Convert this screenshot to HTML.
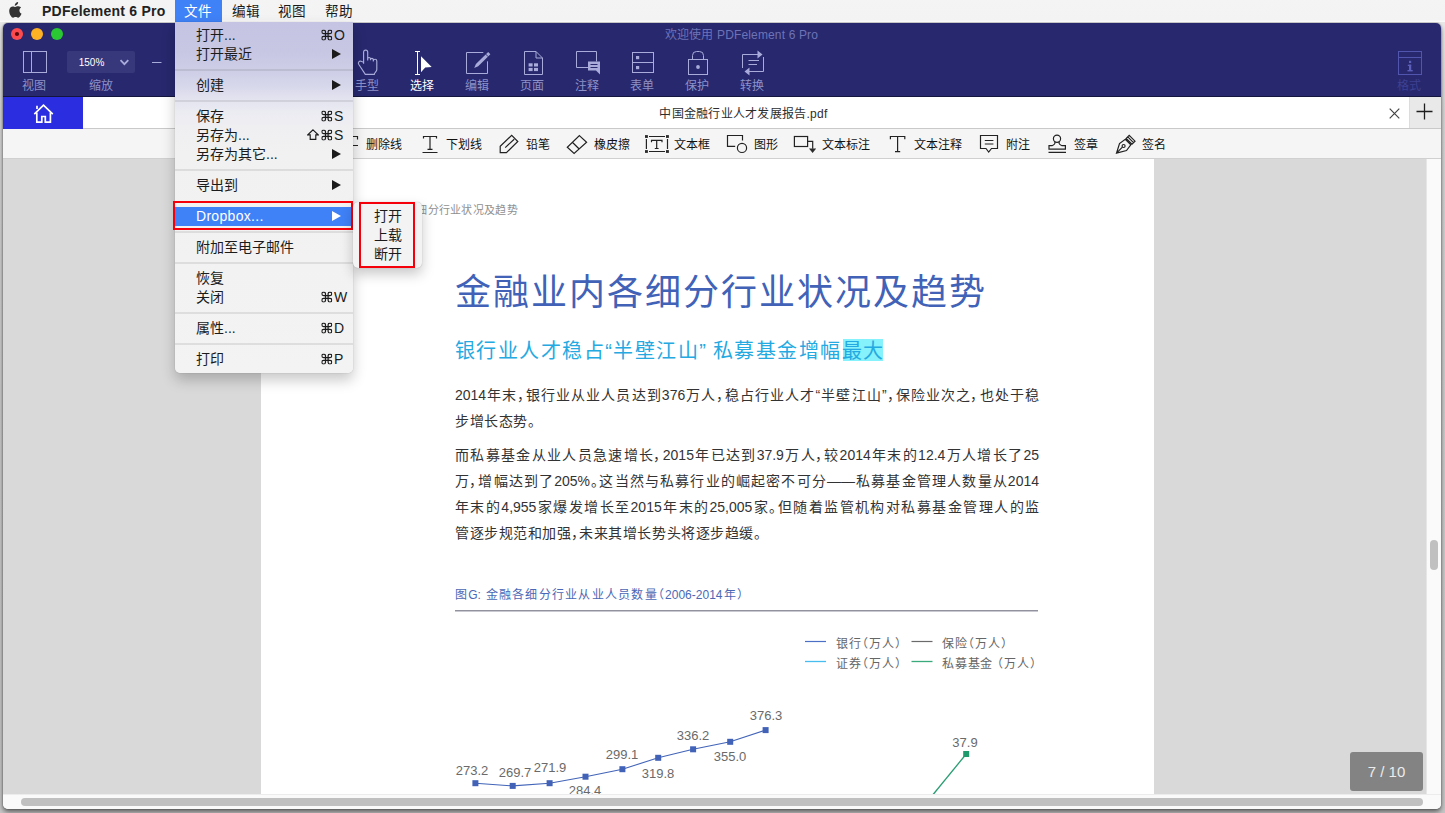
<!DOCTYPE html>
<html lang="zh-CN">
<head>
<meta charset="utf-8">
<title>PDFelement 6 Pro</title>
<style>
*{box-sizing:border-box;margin:0;padding:0}
html,body{width:1445px;height:813px;overflow:hidden}
body{position:relative;background:linear-gradient(180deg,#e8e8e8 22px,#d6d6d6 110px,#cbcbcb 400px,#c6c6c6 800px);font-family:"Liberation Sans",sans-serif;color:#222;-webkit-font-smoothing:antialiased}
.a{position:absolute}
.t{position:absolute;white-space:nowrap;overflow:hidden}
svg{position:absolute;left:0;top:0;overflow:visible}
/* window */
#shadow{left:3px;top:23px;width:1438px;height:786px;border-radius:5px;background:#fafafa;box-shadow:0 0 1.500px rgba(0,0,0,.55),0 3px 5px rgba(0,0,0,.5)}
#win{left:0;top:0;width:1445px;height:813px;clip-path:inset(23px 4px 4px 3px round 5px)}
#navy{left:3px;top:23px;width:1438px;height:74px;background:#27286e;border-bottom:1px solid #15163f}
.tl{font-size:12px;line-height:16px;height:16px;width:60px;text-align:center;color:#8d91c8;top:78px}
#tabbar{left:3px;top:97px;width:1438px;height:32px;background:#fff;border-bottom:1px solid #c9c9c9}
#home{left:3px;top:97px;width:80px;height:32px;background:#2b2de0}
#plusbox{left:1409px;top:97px;width:32px;height:31px;background:#e9e9e9;border-left:1px solid #dcdcdc}
#annot{left:3px;top:129px;width:1438px;height:30px;background:#f5f5f5;border-bottom:1px solid #d0d0d0}
.al{font-size:12px;line-height:16px;height:16px;top:137px;color:#111;font-weight:500}
#doc{left:3px;top:159px;width:1424px;height:635px;background:#d9d9d9}
#page{left:261px;top:159px;width:893px;height:635px;background:#fff}
#vs{left:1426px;top:159px;width:15px;height:635px;background:#fafafa;border-left:1px solid #e6e6e6}
#hs{left:3px;top:794px;width:1438px;height:15px;background:#fafafa;border-top:1px solid #ececec}
.thumb{background:#c0c0c0;border-radius:4px}
#badge{left:1350px;top:752px;width:73px;height:39px;background:#838383;border-radius:3px;color:#ececec;font-size:15px;line-height:39px;text-align:center}
/* menubar */
#mbar{left:0;top:0;width:1445px;height:22px;background:linear-gradient(180deg,#f4f4f4 0,#f3f3f3 20px,#f9f9f9 21px,#fbfbfb 22px)}
.mb{font-size:13.600px;line-height:22px;height:22px;top:1px;color:#1a1a1a}
/* dropdown */
#menu{left:175px;top:22px;width:178px;height:351px;border-radius:0 0 5px 5px;
 background:linear-gradient(180deg,#c5c5e3 0px,#c7c7e4 30px,#cfcfe7 52px,#d9d9ec 66px,#e4e4f0 78px,#ebebf2 90px,#efeff2 104px,#f1f1f1 130px,#f3f3f3 351px);
 box-shadow:0 7px 14px rgba(0,0,0,.22),0 0 1px rgba(0,0,0,.35)}
.mi{font-size:14px;line-height:19px;height:19px;left:196px;color:#1b1b1b}
.sep{left:175px;width:178px;height:2px;background:rgba(0,0,0,.085)}
.sk{font-size:14px;line-height:19px;height:19px;color:#1b1b1b}
#sub{left:353px;top:202px;width:69px;height:66px;border-radius:5px;background:#f3f3f3;box-shadow:0 6px 13px rgba(0,0,0,.22),0 0 1px rgba(0,0,0,.3)}
.red{border:2px solid #f5000a}
.j{text-align:justify;text-align-last:justify;text-justify:inter-character;font-feature-settings:"palt"}
.b{left:455px;height:24px;line-height:24px;font-size:14px;color:#333}
.lg{height:16px;line-height:16px;font-size:12px;color:#666}
.v{width:40px;height:16px;line-height:16px;font-size:13px;color:#6a6a6a;text-align:center}
</style>
</head>
<body>
<div class="a" id="shadow"></div>
<div class="a" id="win">
  <div class="a" id="navy"></div>
  <div class="a" id="tabbar"></div>
  <div class="a" id="home"></div>
  <div class="a" id="plusbox"></div>
  <div class="a" id="annot"></div>
  <div class="a" id="doc"></div>
  <div class="a" id="page"></div>
  <!-- page content -->
  <div class="t" style="left:350px;top:202px;width:168px;height:16px;line-height:16px;font-size:11px;letter-spacing:.3px;color:#909090;text-align:right">金融业内各细分行业状况及趋势</div>
  <div class="t j" style="left:455px;top:270px;width:530px;height:46px;line-height:46px;font-size:36px;font-weight:500;color:#4162b7">金融业内各细分行业状况及趋势</div>
  <div class="a" style="left:843px;top:339px;width:40px;height:22px;background:#86f2fb"></div>
  <div class="t j" style="left:455px;top:337px;width:428px;height:28px;line-height:28px;font-size:20px;font-weight:500;color:#25a9e1">银行业人才稳占“半壁江山” 私募基金增幅最大</div>
  <div class="t j b" style="top:383px;width:584px">2014年末，银行业从业人员达到376万人，稳占行业人才“半壁江山”，保险业次之，也处于稳</div>
  <div class="t j b" style="top:409px;width:80px">步增长态势。</div>
  <div class="t j b" style="top:443px;width:584px">而私募基金从业人员急速增长，2015年已达到37.9万人，较2014年末的12.4万人增长了25</div>
  <div class="t j b" style="top:469px;width:584px">万，增幅达到了205%。这当然与私募行业的崛起密不可分——私募基金管理人数量从2014</div>
  <div class="t j b" style="top:495px;width:584px">年末的4,955家爆发增长至2015年末的25,005家。但随着监管机构对私募基金管理人的监</div>
  <div class="t j b" style="top:521px;width:306px">管逐步规范和加强，未来其增长势头将逐步趋缓。</div>
  <div class="t j" style="left:455px;top:587px;width:288px;height:16px;line-height:16px;font-size:12px;color:#4a68b5">图G: 金融各细分行业从业人员数量（2006-2014年）</div>
  <div class="a" style="left:455px;top:610px;width:583px;height:2px;background:linear-gradient(180deg,#9a9aa6 0,#8a8a98 1px,#c9c9d1 1px,#c9c9d1 2px)"></div>
  <svg width="1445" height="813" viewBox="0 0 1445 813" fill="none">
    <path d="M805 641.500H826" stroke="#4a6fc4" stroke-width="1.200"/><path d="M911.500 641.500H932.500" stroke="#6a6a6a" stroke-width="1.200"/>
    <path d="M805 661.500H826" stroke="#46bdee" stroke-width="1.300"/><path d="M911.500 661.500H932.500" stroke="#3aaa7c" stroke-width="1.300"/>
    <path d="M475.400 783.200L512.700 785.900L549.600 783.200L585.500 776.700L622.400 769.200L658.200 757.800L693.100 749.300L730.200 741.800L765.600 730.100" stroke="#4264b8" stroke-width="1.100"/>
    <g fill="#4162b7"><rect x="472.400" y="780.200" width="6" height="6"/><rect x="509.700" y="782.900" width="6" height="6"/><rect x="546.600" y="780.200" width="6" height="6"/><rect x="582.500" y="773.700" width="6" height="6"/><rect x="619.400" y="766.200" width="6" height="6"/><rect x="655.200" y="754.800" width="6" height="6"/><rect x="690.100" y="746.300" width="6" height="6"/><rect x="727.200" y="738.800" width="6" height="6"/><rect x="762.600" y="727.100" width="6" height="6"/></g>
    <path d="M931.500 796.500L966.200 754" stroke="#2a9d73" stroke-width="1.300"/><rect x="963.200" y="751" width="6" height="6" fill="#1f9a6d"/>
  </svg>
  <div class="t j lg" style="left:836px;top:636px;width:65px">银行（万人）</div>
  <div class="t j lg" style="left:942px;top:636px;width:65px">保险（万人）</div>
  <div class="t j lg" style="left:836px;top:656px;width:65px">证券（万人）</div>
  <div class="t j lg" style="left:942px;top:656px;width:94px">私募基金 （万人）</div>
  <div class="t v" style="left:452px;top:763px">273.2</div>
  <div class="t v" style="left:495px;top:765px">269.7</div>
  <div class="t v" style="left:530px;top:760px">271.9</div>
  <div class="t v" style="left:565px;top:783px">284.4</div>
  <div class="t v" style="left:602px;top:747px">299.1</div>
  <div class="t v" style="left:638px;top:766px">319.8</div>
  <div class="t v" style="left:673px;top:728px">336.2</div>
  <div class="t v" style="left:710px;top:749px">355.0</div>
  <div class="t v" style="left:746px;top:708px">376.3</div>
  <div class="t v" style="left:945px;top:735px">37.9</div>
  <div class="a" id="vs"></div>
  <div class="a" id="hs"></div>
  <div class="a thumb" style="left:1430px;top:540px;width:8px;height:30px"></div>
  <div class="a thumb" style="left:21px;top:798px;width:1402px;height:8px"></div>
  <div class="a" id="badge">7 / 10</div>
  <!-- title + traffic lights -->
  <div class="t" style="left:600px;top:27px;width:283px;height:16px;line-height:16px;font-size:12px;text-align:center;color:#6e73b6;letter-spacing:.15px">欢迎使用 PDFelement 6 Pro</div>
  <svg width="1445" height="813" viewBox="0 0 1445 813" fill="none">
    <!-- traffic lights -->
    <circle cx="17" cy="34" r="6" fill="#fc4a4e"/><circle cx="17" cy="34" r="2.1" fill="#5a0a0c"/>
    <circle cx="37" cy="34" r="6" fill="#fdb125"/>
    <circle cx="57" cy="34" r="6" fill="#2ac833"/>
    <g stroke="#a9acda" stroke-width="1" fill="none">
      <!-- view -->
      <rect x="23.5" y="51.5" width="23" height="21"/><path d="M31.5 51.5V72.5"/>
      <!-- zoom box -->
      <rect x="67" y="51" width="68" height="22" rx="2" fill="#36387b" stroke="none"/>
      <path d="M120.5 60.2L124.4 64.2L128.3 60.2" stroke-width="1.8"/>
      <path d="M152 62.5H161.5"/>
      <!-- hand -->
      <path stroke-width="1.150" d="M363.600 63.800V52.200a2.050 2.050 0 0 1 4.100 0V60.600M367.700 58.900a1.400 1.400 0 0 1 2.800 0V60.300M370.500 59.800a1.400 1.400 0 0 1 2.800 0V61.500M373.300 61a1.750 1.750 0 0 1 3.500 0V69.500c0 2.200-2.500 2.800-2.500 4.800H365.300L358.700 64.300c-1.100-1.900 .700-3.700 2.300-3.100L363.600 62.300"/>
      <!-- edit -->
      <path d="M483.300 52.500H466.500V73.500H487.500V61.300"/>
      <!-- page -->
      <path d="M524.500 51.500H536L542.500 58V74.500H524.500zM536 51.500V58H542.500"/>
      <!-- comment -->
      <path d="M588 67.500H576.500V51.500H596.500V61.500"/>
      <!-- form -->
      <rect x="632.500" y="52.500" width="21" height="20"/><path d="M632.500 62.500H653.500"/>
      <!-- lock -->
      <rect x="688.500" y="59.500" width="19" height="15"/><path d="M692.500 59.500V55.500a4 4 0 0 1 4-4h3a4 4 0 0 1 4 4V59.500"/>
      <!-- convert -->
      <path d="M742.500 68V54.500H759M763.500 57V71.500H748M748.500 60.500H759M748.500 64.500H757"/>
    </g>
    <g fill="#a9acda">
      <!-- edit pencil -->
      <path d="M474.200 68L475.900 64.100L488.200 52L490.400 54.300L478.200 66.300z"/><path d="M485.700 54.100L488.300 56.800" stroke="#27286e" stroke-width=".9"/>
      <!-- page grid -->
      <rect x="528.600" y="63.300" width="4" height="3.200"/><rect x="534" y="63.300" width="4" height="3.200"/>
      <rect x="528.600" y="67.900" width="4" height="3.200"/><rect x="534" y="67.900" width="4" height="3.200"/>
      <!-- comment bubble -->
      <path d="M588 61.500H600V74.500L596 70.500H588z"/>
      <!-- form squares -->
      <rect x="636" y="56" width="3.200" height="3.200"/><rect x="636" y="66" width="3.200" height="3.200"/>
      <!-- lock dot -->
      <circle cx="698" cy="67" r="1.900"/>
      <!-- convert heads -->
      <path d="M757.500 50.500L762.500 54.500L757.500 58.500z"/><path d="M749.500 67.500L744.500 71.500L749.500 75.500z"/>
    </g>
    <path d="M590.500 64.500H597.500M590.500 67.500H597.500" stroke="#27286e" stroke-width="1"/>
    <!-- select (active, white) -->
    <path d="M415 51.500H420M417.500 51.500V74.500M415 74.500H420" stroke="#fff" stroke-width="1"/>
    <path d="M421 56.300L431.700 66.900L425.200 67.600L421 72.200z" fill="#fff"/>
    <!-- format -->
    <g stroke="#5255ae" stroke-width="1" fill="none"><rect x="1398.500" y="51.500" width="23" height="23"/><path d="M1398.500 57.500H1421.500"/></g>
    <g fill="#5c5fb9"><rect x="1409" y="60.800" width="2.200" height="2.200"/><rect x="1407.800" y="64.700" width="3.400" height="1.300"/><rect x="1409" y="64.700" width="2.200" height="6"/><rect x="1407.500" y="70" width="5.200" height="1.400"/></g>
    <!-- home -->
    <g stroke="#fff" stroke-width="1.700" fill="none" stroke-linejoin="miter">
      <path d="M34.300 114.200L43.500 105.200L52.800 114.200"/>
      <path d="M36.800 112.500V122.200H41.800V116.500H45.300V122.200H50.400V112.500"/>
      <path d="M37 109V105.800"/>
    </g>
    <!-- tab close / plus -->
    <path d="M1389.700 108.700L1399.300 118.300M1399.300 108.700L1389.700 118.300" stroke="#444" stroke-width="1.200"/>
    <path d="M1416.500 111.500H1432.500M1424.500 103.500V119.500" stroke="#1e1e1e" stroke-width="1.300"/>
  </svg>
  <div class="t" style="left:75px;top:55px;width:33px;height:15px;line-height:15px;font-size:10px;color:#fff;text-align:center">150%</div>
  <div class="t tl" style="left:4px">视图</div>
  <div class="t tl" style="left:71px">缩放</div>
  <div class="t tl" style="left:337px">手型</div>
  <div class="t tl" style="left:392px;color:#fff">选择</div>
  <div class="t tl" style="left:447px">编辑</div>
  <div class="t tl" style="left:502px">页面</div>
  <div class="t tl" style="left:557px">注释</div>
  <div class="t tl" style="left:612px">表单</div>
  <div class="t tl" style="left:667px">保护</div>
  <div class="t tl" style="left:722px">转换</div>
  <div class="t tl" style="left:1379px;color:#3e4192">格式</div>
  <div class="t" style="left:560px;top:106px;width:367px;height:17px;line-height:17px;font-size:12px;text-align:center;color:#2e2e2e;letter-spacing:.25px">中国金融行业人才发展报告.pdf</div>
  <!-- annotation toolbar -->
  <svg width="1445" height="813" viewBox="0 0 1445 813" fill="none" stroke="#222" stroke-width="1.200">
    <path d="M343 136.500H357.500V139.500M340 145.500H358"/>
    <path d="M423.500 138.500V136.500H436.500V138.500M430 136.500V149M427.500 149.300H432.500M422.500 152.500H437.500"/>
    <path d="M500.200 152.600V146.300L511.700 135.300L517.800 141.500L506.400 152.600zM505.200 147.600L514.200 139.300"/>
    <path d="M579.400 135.600L586.600 142.200L574.100 153.400L567.300 147.300zM572.600 142.500L578.700 148.500"/>
    <path d="M649 136.500H665M649 151.500H665M646.400 139V149M667.500 139V149"/>
    <path d="M651.500 142.200V140.300H662V142.200M656.700 140.300V148.500M654.800 148.500H658.600"/>
    <g fill="#2b2b2b" stroke="none"><rect x="645" y="135.100" width="2.900" height="2.800"/><rect x="666" y="135.100" width="2.900" height="2.800"/><rect x="645" y="150.100" width="2.900" height="2.800"/><rect x="666" y="150.100" width="2.900" height="2.800"/></g>
    <path d="M742.500 140.600V135.500H727.500V146.400H735.200"/><circle cx="742" cy="147.900" r="4.600"/>
    <rect x="794.400" y="136.500" width="13.200" height="10"/><path d="M807.600 141.400H812.700V148.700"/><path d="M809 148.400H816.200L812.600 152.900z" fill="#2b2b2b" stroke="none"/>
    <path d="M890.400 139.200V136.500H904.800V139.200M897.600 136.500V151.600M895 151.700H900.200"/>
    <path d="M980.500 135.500H997.500V148.500H991.500L988.700 152L986 148.500H980.500zM984.800 140.500H993.400M984.800 144H993.400"/>
    <circle cx="1057" cy="138.700" r="3.600"/><path d="M1054.800 141.700C1055.400 143.300 1054.500 144.800 1052 145.700H1049V149.200H1065.400V145.700H1062C1059.500 144.800 1058.600 143.300 1059.200 141.700M1048.500 152.300H1066"/>
    <path d="M1116.500 153.200L1119.500 143.500L1125.300 139.300L1130.800 144.800L1126.500 150.500zM1116.500 153.200L1122.400 147.200M1126.200 138.400L1129.200 135.400L1135 141.200L1132 144.200zM1127.800 136.900L1133.500 142.600"/><circle cx="1123.600" cy="146" r="1.500"/>
  </svg>
  <div class="t al" style="left:366px;width:36px">删除线</div>
  <div class="t al" style="left:446px;width:37px">下划线</div>
  <div class="t al" style="left:526px;width:25px">铅笔</div>
  <div class="t al" style="left:594px;width:37px">橡皮擦</div>
  <div class="t al" style="left:674px;width:37px">文本框</div>
  <div class="t al" style="left:754px;width:25px">图形</div>
  <div class="t al" style="left:822px;width:49px">文本标注</div>
  <div class="t al" style="left:914px;width:49px">文本注释</div>
  <div class="t al" style="left:1006px;width:25px">附注</div>
  <div class="t al" style="left:1074px;width:25px">签章</div>
  <div class="t al" style="left:1142px;width:25px">签名</div>
</div>
<div class="a" id="mbar"></div>
<svg width="0" height="0" style="position:absolute"><defs>
  <symbol id="cmd" viewBox="0 0 11 11"><path d="M4.200 4.200V2.350a1.850 1.850 0 1 0-1.850 1.850H8.650a1.850 1.850 0 1 0-1.850-1.850V8.650a1.850 1.850 0 1 0 1.850-1.850H2.350a1.850 1.850 0 1 0 1.850 1.850z" fill="none" stroke="currentColor" stroke-width="1.250"/></symbol>
  <symbol id="shf" viewBox="0 0 12 11"><path d="M6 .800L11.200 5.800H8.800V10.300H3.200V5.800H.800z" fill="none" stroke="currentColor" stroke-width="1.150" stroke-linejoin="miter"/></symbol>
  <symbol id="arr" viewBox="0 0 9 10"><path d="M0 0L9 5L0 10z" fill="currentColor"/></symbol>
</defs></svg>
<!-- menubar items -->
<svg width="13" height="16" viewBox="0 0 12.600 16" style="left:9px;top:2px"><path d="M8.900 0c.1 1-.3 1.900-.9 2.600c-.6 .7-1.500 1.200-2.400 1.100c-.1-.9 .3-1.900 .9-2.500C7.100 .5 8.100 .05 8.900 0zM11.900 5.500c-.1 .05-1.700 1-1.700 3c0 2.300 2 3.100 2.100 3.100c0 .05-.3 1.100-1.050 2.200c-.65 .95-1.300 1.900-2.350 1.900c-1 0-1.300-.6-2.500-.6c-1.150 0-1.550 .6-2.500 .6c-.95 0-1.650-.9-2.400-2C.6 12.500 0 10.600 0 8.800C0 5.900 1.900 4.400 3.700 4.400c1 0 1.800 .65 2.400 .65c.6 0 1.500-.7 2.650-.7c.45 0 2 .05 3.150 1.150z" fill="#333"/></svg>
<div class="t mb" style="left:42px;top:0;width:126px;color:#222;font-weight:bold;font-size:14px;letter-spacing:.23px">PDFelement 6 Pro</div>
<div class="a" style="left:175px;top:0;width:47px;height:22px;background:#3f81f6"></div>
<div class="t mb" style="left:174px;width:47px;text-align:center;color:#fff">文件</div>
<div class="t mb" style="left:222px;width:47px;text-align:center">编辑</div>
<div class="t mb" style="left:268px;width:48px;text-align:center">视图</div>
<div class="t mb" style="left:315px;width:48px;text-align:center">帮助</div>
<!-- dropdown -->
<div class="a" id="menu"></div>
<div class="a sep" style="top:69px"></div>
<div class="a sep" style="top:100px"></div>
<div class="a sep" style="top:169px"></div>
<div class="a sep" style="top:231px"></div>
<div class="a sep" style="top:262px"></div>
<div class="a sep" style="top:312px"></div>
<div class="a sep" style="top:343px"></div>
<div class="a" style="left:175px;top:207px;width:178px;height:19px;background:#3f81f7"></div>
<div class="a red" style="left:173px;top:201px;width:180px;height:29px"></div>
<div class="t mi" style="top:26px;width:120px">打开...</div>
<div class="t mi" style="top:45px;width:120px">打开最近</div>
<div class="t mi" style="top:76px;width:120px">创建</div>
<div class="t mi" style="top:107px;width:100px">保存</div>
<div class="t mi" style="top:126px;width:100px">另存为...</div>
<div class="t mi" style="top:145px;width:130px">另存为其它...</div>
<div class="t mi" style="top:176px;width:120px">导出到</div>
<div class="t mi" style="top:207px;width:120px;color:#fff;letter-spacing:.3px">Dropbox...</div>
<div class="t mi" style="top:238px;width:140px">附加至电子邮件</div>
<div class="t mi" style="top:269px;width:100px">恢复</div>
<div class="t mi" style="top:288px;width:100px">关闭</div>
<div class="t mi" style="top:319px;width:100px">属性...</div>
<div class="t mi" style="top:350px;width:100px">打印</div>
<!-- shortcuts -->
<svg width="1445" height="813" viewBox="0 0 1445 813" color="#1b1b1b">
  <use href="#cmd" x="321.300" y="29.500" width="11" height="11"/>
  <use href="#cmd" x="321.300" y="110.500" width="11" height="11"/>
  <use href="#shf" x="307" y="129" width="12" height="11"/>
  <use href="#cmd" x="321.300" y="129.500" width="11" height="11"/>
  <use href="#cmd" x="321.300" y="291.500" width="11" height="11"/>
  <use href="#cmd" x="321.300" y="322.500" width="11" height="11"/>
  <use href="#cmd" x="321.300" y="353.500" width="11" height="11"/>
  <use href="#arr" x="332" y="49" width="9" height="10"/>
  <use href="#arr" x="332" y="80" width="9" height="10"/>
  <use href="#arr" x="332" y="149" width="9" height="10"/>
  <use href="#arr" x="332" y="180" width="9" height="10"/>
  <use href="#arr" x="332" y="211" width="9" height="10" color="#fff"/>
</svg>
<div class="t sk" style="left:334px;top:26px;width:18px">O</div>
<div class="t sk" style="left:334px;top:107px;width:18px">S</div>
<div class="t sk" style="left:334px;top:126px;width:18px">S</div>
<div class="t sk" style="left:334px;top:288px;width:18px">W</div>
<div class="t sk" style="left:334px;top:319px;width:18px">D</div>
<div class="t sk" style="left:334px;top:350px;width:18px">P</div>
<!-- submenu -->
<div class="a" id="sub"></div>
<div class="a red" style="left:359px;top:202px;width:56px;height:66px"></div>
<div class="t mi" style="left:374px;top:207px;width:34px">打开</div>
<div class="t mi" style="left:374px;top:226px;width:34px">上载</div>
<div class="t mi" style="left:374px;top:245px;width:34px">断开</div>
</body>
</html>
